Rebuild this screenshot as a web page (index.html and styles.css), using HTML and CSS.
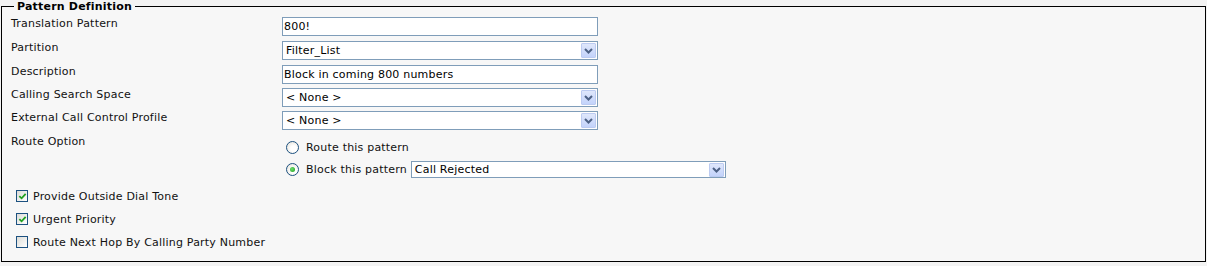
FILE: index.html
```html
<!DOCTYPE html>
<html>
<head>
<meta charset="utf-8">
<link rel="stylesheet" href="styles.css">
</head>
<body>
<fieldset class="panel">
  <legend class="panel-title">Pattern Definition</legend>
  <div class="form">
    <div class="row">
      <div class="label">Translation Pattern</div>
      <div class="textbox">800!</div>
    </div>
    <div class="row">
      <div class="label">Partition</div>
      <div class="select"><span class="select-text">Filter_List</span><span class="arrow"><svg width="9" height="6" viewBox="0 0 9 6"><path d="M1 1 L4.5 4.5 L8 1" fill="none" stroke="#4d6185" stroke-width="2"/></svg></span></div>
    </div>
    <div class="row tight">
      <div class="label">Description</div>
      <div class="textbox">Block in coming 800 numbers</div>
    </div>
    <div class="row tight">
      <div class="label">Calling Search Space</div>
      <div class="select"><span class="select-text">&lt; None &gt;</span><span class="arrow"><svg width="9" height="6" viewBox="0 0 9 6"><path d="M1 1 L4.5 4.5 L8 1" fill="none" stroke="#4d6185" stroke-width="2"/></svg></span></div>
    </div>
    <div class="row">
      <div class="label">External Call Control Profile</div>
      <div class="select"><span class="select-text">&lt; None &gt;</span><span class="arrow"><svg width="9" height="6" viewBox="0 0 9 6"><path d="M1 1 L4.5 4.5 L8 1" fill="none" stroke="#4d6185" stroke-width="2"/></svg></span></div>
    </div>
    <div class="row route">
      <div class="label">Route Option</div>
      <div class="options">
        <div class="option">
          <span class="radio"></span><span class="option-text">Route this pattern</span>
        </div>
        <div class="option">
          <span class="radio checked"><span class="dot"></span></span><span class="option-text">Block this pattern</span>
          <div class="select small"><span class="select-text">Call Rejected</span><span class="arrow"><svg width="9" height="6" viewBox="0 0 9 6"><path d="M1 1 L4.5 4.5 L8 1" fill="none" stroke="#4d6185" stroke-width="2"/></svg></span></div>
        </div>
      </div>
    </div>
  </div>
  <div class="checks">
    <div class="check-row"><span class="checkbox"><svg width="10" height="10" viewBox="0 0 10 10"><path d="M1.5 4.5 L4 7 L8.5 2" fill="none" stroke="#21a121" stroke-width="2"/></svg></span><span>Provide Outside Dial Tone</span></div>
    <div class="check-row"><span class="checkbox"><svg width="10" height="10" viewBox="0 0 10 10"><path d="M1.5 4.5 L4 7 L8.5 2" fill="none" stroke="#21a121" stroke-width="2"/></svg></span><span>Urgent Priority</span></div>
    <div class="check-row"><span class="checkbox"></span><span>Route Next Hop By Calling Party Number</span></div>
  </div>
</fieldset>
</body>
</html>
```
FILE: styles.css
```css
html, body {
  margin: 0;
  padding: 0;
}
body {
  background: #f3f3f3;
  font-family: "DejaVu Sans", Verdana, sans-serif;
  font-size: 11px;
  line-height: 13px;
  letter-spacing: 0.2px;
  color: #111;
  width: 1207px;
  height: 266px;
  overflow: hidden;
}
.panel {
  box-sizing: border-box;
  width: 1205px;
  height: 262px;
  margin: 0 0 0 1px;
  padding: 4px 0 0 0;
  border: 1px solid #000;
  background: #f7f7f7;
  min-inline-size: 0;
}
.panel-title {
  margin-left: 12px;
  padding: 0 3px;
  font-weight: bold;
  line-height: 13px;
  color: #000;
}
.form {
  display: flex;
  flex-direction: column;
}
.row {
  display: flex;
  align-items: flex-start;
  margin-bottom: 5px;
}
.row.tight {
  margin-bottom: 4px;
}
.label {
  box-sizing: border-box;
  width: 280px;
  padding-left: 9px;
  flex: none;
}
.textbox, .select {
  box-sizing: border-box;
  width: 316px;
  height: 19px;
  border: 1px solid #7f9db9;
  background: #fff;
  color: #000;
  line-height: 17px;
  white-space: nowrap;
}
.textbox {
  padding-left: 1px;
}
.select {
  display: flex;
  align-items: center;
  justify-content: space-between;
  padding-left: 3px;
  padding-right: 1px;
}
.arrow {
  box-sizing: border-box;
  width: 15px;
  height: 15px;
  display: flex;
  align-items: center;
  justify-content: center;
  background: linear-gradient(#dfe7fb, #c3d3fb);
  border: 1px solid #bccbf1;
  border-radius: 1px;
}
.route {
  margin-bottom: 0;
}
.options {
  display: flex;
  flex-direction: column;
  padding-top: 3px;
  gap: 3px;
}
.option {
  display: flex;
  align-items: center;
  height: 19px;
  padding-left: 4px;
}
.radio {
  box-sizing: border-box;
  width: 13px;
  height: 13px;
  border-radius: 50%;
  border: 1px solid #1c5180;
  background: radial-gradient(circle at 60% 60%, #fff 30%, #e0ddd3 100%);
  display: flex;
  align-items: center;
  justify-content: center;
  margin-right: 7px;
  flex: none;
}
.dot {
  width: 5px;
  height: 5px;
  border-radius: 50%;
  background: radial-gradient(circle at 40% 40%, #6ee06e, #1a9a1a);
}
.option-text {
  margin-right: 4px;
}
.select.small {
  width: 315px;
  height: 17px;
  line-height: 15px;
}
.select.small .arrow {
  height: 14px;
}
.checks {
  display: flex;
  flex-direction: column;
  padding: 11px 0 0 14px;
  gap: 11px;
}
.check-row {
  display: flex;
  align-items: center;
  height: 12px;
}
.checkbox {
  box-sizing: border-box;
  width: 12px;
  height: 12px;
  border: 1px solid #1c5180;
  background: linear-gradient(135deg, #dcdcd7, #fff);
  display: flex;
  align-items: center;
  justify-content: center;
  margin-right: 5px;
  flex: none;
}
.checkbox svg {
  width: 9px;
  height: 9px;
}
```
